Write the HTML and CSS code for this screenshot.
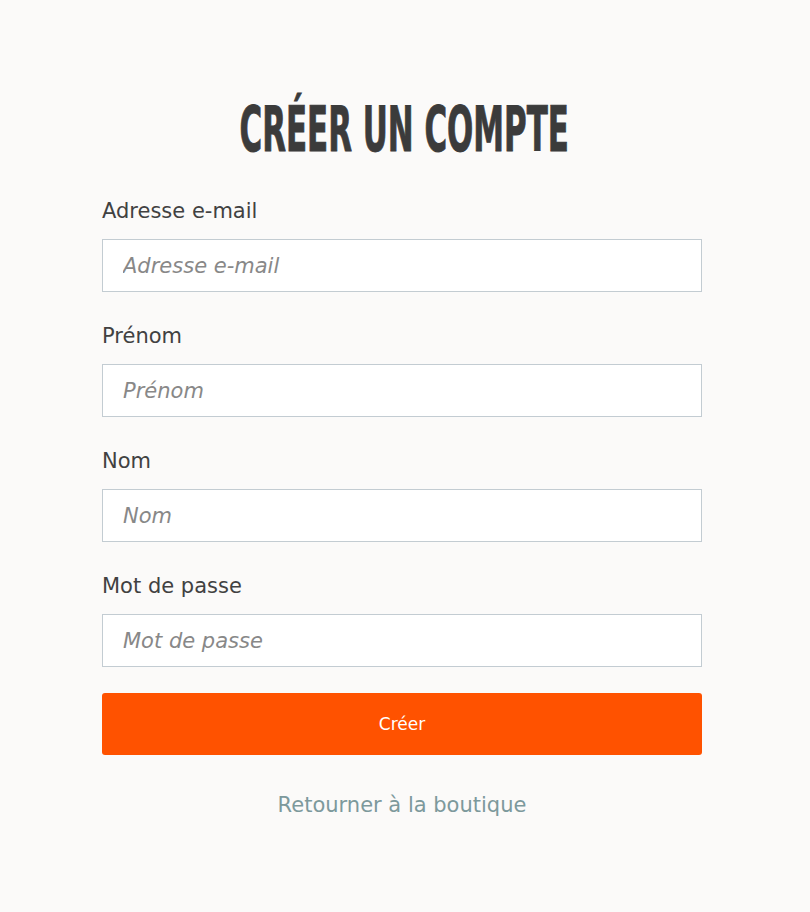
FILE: index.html
```html
<!DOCTYPE html>
<html lang="fr">
<head>
<meta charset="utf-8">
<title>Créer un compte</title>
<link rel="stylesheet" href="styles.css">
</head>
<body>
<main class="page">
  <h1 class="title"><span class="title-text">Créer un compte</span></h1>
  <form class="form">
    <div class="field">
      <label class="label" for="email">Adresse e-mail</label>
      <input class="input" id="email" type="email" placeholder="Adresse e-mail">
    </div>
    <div class="field">
      <label class="label" for="first">Prénom</label>
      <input class="input" id="first" type="text" placeholder="Prénom">
    </div>
    <div class="field">
      <label class="label" for="last">Nom</label>
      <input class="input" id="last" type="text" placeholder="Nom">
    </div>
    <div class="field">
      <label class="label" for="pass">Mot de passe</label>
      <input class="input" id="pass" type="password" placeholder="Mot de passe">
    </div>
    <button class="submit" type="button">Créer</button>
  </form>
  <div class="back"><a class="back-link" href="#">Retourner à la boutique</a></div>
</main>
</body>
</html>
```
FILE: styles.css
```css
html, body {
  margin: 0;
  padding: 0;
  background: #fbfaf9;
}
body {
  font-family: "DejaVu Sans", "Open Sans", sans-serif;
  color: #414141;
}
.page {
  padding: 95px 108px 0 102px;
}
.title {
  margin: 0 0 32px;
  height: 70px;
  line-height: 70px;
  text-align: center;
  white-space: nowrap;
  font-family: "DejaVu Sans Condensed", "DejaVu Sans", sans-serif;
  font-weight: 700;
  font-size: 63px;
  color: #3b3b3b;
  text-transform: uppercase;
}
.title-text {
  display: inline-block;
  -webkit-text-stroke: 1px #3b3b3b;
  transform: scaleX(0.545);
}
.form {
  display: flex;
  flex-direction: column;
}
.field {
  display: flex;
  flex-direction: column;
  margin-bottom: 30px;
}
.field:last-of-type {
  margin-bottom: 0;
}
.label {
  display: block;
  height: 28px;
  line-height: 28px;
  font-size: 21px;
  margin-bottom: 14px;
  color: #414141;
}
.input {
  box-sizing: border-box;
  width: 600px;
  height: 53px;
  margin: 0;
  padding: 0 20px;
  border: 1px solid #c3ccd2;
  background: #ffffff;
  font-family: inherit;
  font-size: 21px;
  font-style: italic;
  color: #414141;
  outline: none;
}
.input::placeholder {
  color: #888888;
  font-style: italic;
}
.submit {
  margin-top: 26px;
  width: 600px;
  height: 62px;
  padding: 0;
  border: none;
  border-radius: 3px;
  background: #ff5200;
  color: #ffffff;
  font-family: inherit;
  font-size: 17px;
}
.back {
  margin-top: 35px;
  height: 30px;
  line-height: 30px;
  text-align: center;
}
.back-link {
  font-size: 21px;
  color: #7d999c;
  text-decoration: none;
}
```
